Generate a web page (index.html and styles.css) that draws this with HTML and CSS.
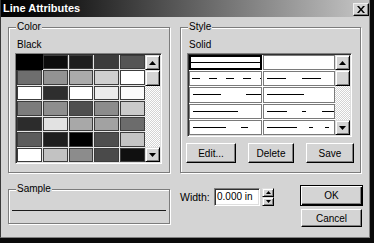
FILE: index.html
```html
<!DOCTYPE html>
<html>
<head>
<meta charset="utf-8">
<link rel="stylesheet" href="styles.css">
</head>
<body>
<div class="window">
  <div class="titlebar">
    <span class="title">Line Attributes</span>
    <span class="close"><svg width="8" height="7" viewBox="0 0 8 7"><path d="M0 0h2l2 2.5L6 0h2L5 3.5 8 7H6L4 4.5 2 7H0l3-3.5z" fill="#000"/></svg></span>
  </div>
  <div class="content">
    <fieldset class="group">
      <legend>Color</legend>
      <div class="current">Black</div>
      <div class="frame color-frame">
        <div class="swatches">
          <div class="sw sel" style="background:#000"></div><div class="sw" style="background:#0c0c0c"></div><div class="sw" style="background:#1e1e1e"></div><div class="sw" style="background:#3c3c3c"></div><div class="sw" style="background:#555"></div>
          <div class="sw" style="background:#6e6e6e"></div><div class="sw" style="background:#939393"></div><div class="sw" style="background:#ababab"></div><div class="sw" style="background:#cfcfcf"></div><div class="sw" style="background:#fff"></div>
          <div class="sw" style="background:#fff"></div><div class="sw" style="background:#2e2e2e"></div><div class="sw" style="background:#fff"></div><div class="sw" style="background:#ececec"></div><div class="sw" style="background:#fafafa"></div>
          <div class="sw" style="background:#7c7c7c"></div><div class="sw" style="background:#8e8e8e"></div><div class="sw" style="background:#4e4e4e"></div><div class="sw" style="background:#8c8c8c"></div><div class="sw" style="background:#cacaca"></div>
          <div class="sw" style="background:#2c2c2c"></div><div class="sw" style="background:#e2e2e2"></div><div class="sw" style="background:#a8a8a8"></div><div class="sw" style="background:#a2a2a2"></div><div class="sw" style="background:#6c6c6c"></div>
          <div class="sw" style="background:#5c5c5c"></div><div class="sw" style="background:#1e1e1e"></div><div class="sw" style="background:#000"></div><div class="sw" style="background:#4e4e4e"></div><div class="sw" style="background:#c4c4c4"></div>
          <div class="sw" style="background:#fff"></div><div class="sw" style="background:#c2c2c2"></div><div class="sw" style="background:#8c8c8c"></div><div class="sw" style="background:#4a4a4a"></div><div class="sw" style="background:#101010"></div>
        </div>
        <div class="scrollbar">
          <div class="sbtn"><svg width="7" height="4" viewBox="0 0 7 4"><polygon points="3.5,0 7,4 0,4" fill="#000"/></svg></div>
          <div class="thumb"></div>
          <div class="track"></div>
          <div class="sbtn"><svg width="7" height="4" viewBox="0 0 7 4"><polygon points="0,0 7,0 3.5,4" fill="#000"/></svg></div>
        </div>
      </div>
    </fieldset>

    <fieldset class="group">
      <legend>Style</legend>
      <div class="current">Solid</div>
      <div class="frame style-frame">
        <div class="styles">
          <div class="st sel"><svg class="ln" height="3"><line x1="0" y1="1.5" x2="100%" y2="1.5"/></svg></div>
          <div class="st"></div>
          <div class="st"><svg class="ln p1" height="3"><line x1="2" y1="1.5" x2="100%" y2="1.5"/></svg></div>
          <div class="st"><svg class="ln p2" height="3"><line x1="3" y1="1.5" x2="100%" y2="1.5"/></svg></div>
          <div class="st"><svg class="ln p3" height="3"><line x1="3" y1="1.5" x2="100%" y2="1.5"/></svg></div>
          <div class="st"><svg class="ln p4" height="3"><line x1="3" y1="1.5" x2="100%" y2="1.5"/></svg></div>
          <div class="st"><svg class="ln p5" height="3"><line x1="3" y1="1.5" x2="100%" y2="1.5"/></svg></div>
          <div class="st"><svg class="ln p6" height="3"><line x1="3" y1="1.5" x2="100%" y2="1.5"/></svg></div>
          <div class="st"><svg class="ln p7" height="3"><line x1="3" y1="1.5" x2="100%" y2="1.5"/></svg></div>
          <div class="st"><svg class="ln p8" height="3"><line x1="3" y1="1.5" x2="100%" y2="1.5"/></svg></div>
        </div>
        <div class="scrollbar">
          <div class="sbtn"><svg width="7" height="4" viewBox="0 0 7 4"><polygon points="3.5,0 7,4 0,4" fill="#000"/></svg></div>
          <div class="thumb"></div>
          <div class="track"></div>
          <div class="sbtn"><svg width="7" height="4" viewBox="0 0 7 4"><polygon points="0,0 7,0 3.5,4" fill="#000"/></svg></div>
        </div>
      </div>
      <div class="actions">
        <button class="btn edit">Edit...</button>
        <button class="btn del">Delete</button>
        <button class="btn save">Save</button>
      </div>
    </fieldset>

    <fieldset class="group sample">
      <legend>Sample</legend>
      <div class="sample-line"></div>
    </fieldset>

    <div class="bottom-right">
      <div class="width-row">
        <span class="wlabel">Width:</span>
        <div class="field">0.000 in</div>
        <div class="spin">
          <div class="spbtn"><svg width="5" height="3" viewBox="0 0 5 3"><polygon points="2.5,0 5,3 0,3" fill="#000"/></svg></div>
          <div class="spbtn"><svg width="5" height="3" viewBox="0 0 5 3"><polygon points="0,0 5,0 2.5,3" fill="#000"/></svg></div>
        </div>
      </div>
      <div class="dialog-buttons">
        <button class="btn ok">OK</button>
        <button class="btn cancel">Cancel</button>
      </div>
    </div>
  </div>
</div>
</body>
</html>
```
FILE: styles.css
```css
html, body {
  margin: 0;
  padding: 0;
  background: #0a0a0a;
}
body {
  font-family: "Liberation Sans", Arial, sans-serif;
  font-size: 10px;
  color: #000;
}
.window {
  width: 370px;
  height: 238px;
  box-sizing: border-box;
  background: #d4d4d4;
  border-left: 1px solid #3a3a3a;
  border-right: 1px solid #808080;
  border-bottom: 1px solid #808080;
}
.titlebar {
  height: 17px;
  display: flex;
  align-items: center;
  padding-left: 2px;
  background: linear-gradient(90deg, #000 0%, #0c0c0c 12%, #c6c6c6 100%);
}
.title {
  flex: 1;
  color: #fff;
  font-weight: bold;
  font-size: 11px;
  line-height: 17px;
}
.close {
  width: 16px;
  height: 13px;
  box-sizing: border-box;
  display: flex;
  align-items: center;
  justify-content: center;
  background: #d4d4d4;
  border: 1px solid;
  border-color: #f0f0f0 #000 #000 #f0f0f0;
  box-shadow: inset -1px -1px 0 #808080;
  margin-top: 1px;
}
.content {
  display: grid;
  grid-template-columns: 162px 181px;
  grid-template-rows: 152px 41px;
  column-gap: 10px;
  row-gap: 10px;
  padding: 4px 0 0 7px;
}
.group {
  margin: 0;
  padding: 0;
  min-width: 0;
  box-sizing: border-box;
  border: 1px solid #7c7c7c;
  box-shadow: inset 1px 1px 0 #fff, 1px 1px 0 #fff;
}
.group legend {
  margin-left: 7px;
  padding: 0 1px;
  font-size: 10px;
  line-height: 12px;
  background: #d4d4d4;
}
.current {
  margin: 6px 0 0 8px;
  line-height: 12px;
}
.frame {
  margin: 2px 0 0 6px;
  box-sizing: border-box;
  display: flex;
  padding: 1px;
  border: 1px solid;
  border-color: #808080 #fff #fff #808080;
  box-shadow: inset 1px 1px 0 #303030, inset -1px -1px 0 #dedede;
}
.color-frame {
  width: 147px;
  height: 111px;
}
.style-frame {
  width: 165px;
  height: 84px;
}
.swatches {
  flex: 1;
  display: grid;
  grid-template-columns: repeat(5, 1fr);
  grid-template-rows: repeat(7, 1fr);
  gap: 1px;
  background: #e6e6e6;
}
.sw {
  border: 1px solid #3c3c3c;
}
.sw.sel {
  border-color: #000;
  box-shadow: 0 0 0 1px #000;
}
.scrollbar {
  width: 15px;
  display: flex;
  flex-direction: column;
}
.sbtn, .thumb {
  height: 15px;
  box-sizing: border-box;
  background: #d4d4d4;
  border: 1px solid;
  border-color: #dedede #000 #000 #dedede;
  box-shadow: inset 1px 1px 0 #fff, inset -1px -1px 0 #808080;
  display: flex;
  align-items: center;
  justify-content: center;
}
.thumb {
  height: 16px;
}
.track {
  flex: 1;
  background: repeating-conic-gradient(#fff 0 25%, #d4d4d4 0 50%) 0 0 / 2px 2px;
}
.styles {
  flex: 1;
  display: grid;
  grid-template-columns: 1fr 1fr;
  grid-template-rows: repeat(5, 1fr);
  gap: 1px;
  background: #fff;
}
.st {
  border: 1px solid #7a7a7a;
  background: #fff;
  display: flex;
  align-items: center;
  min-width: 0;
}
.st.sel {
  border: 2px solid #000;
}
.ln {
  width: 100%;
  display: block;
  overflow: hidden;
}
.ln line {
  stroke: #000;
  stroke-width: 1;
  shape-rendering: crispEdges;
}
.p1 line { stroke-dasharray: 8 9; }
.p2 line { stroke-dasharray: 19 16; }
.p3 line { stroke-dasharray: 28 25; }
.p4 line { stroke-dasharray: 37 60; }
.p5 line { stroke-dasharray: 45 60; }
.p6 line { stroke-dasharray: 20 15 4 16; }
.p7 line { stroke-dasharray: 33 15 7 40; }
.p8 line { stroke-dasharray: 30 12 4 12 4 30; }
.btn {
  font-family: inherit;
  font-size: 10px;
  color: #000;
  padding: 0;
  margin: 0;
  box-sizing: border-box;
  background: #d4d4d4;
  border: 1px solid;
  border-color: #fff #000 #000 #fff;
  box-shadow: inset -1px -1px 0 #808080;
}
.actions {
  margin: 6px 0 0 5px;
  width: 168px;
  display: flex;
  justify-content: space-between;
}
.actions .btn {
  height: 20px;
}
.edit { width: 50px; }
.del { width: 46px; }
.save { width: 48px; }
.sample-line {
  margin: 15px 3px 0 3px;
  border-top: 1px solid #1a1a1a;
}
.bottom-right {
  display: flex;
  align-items: flex-start;
}
.width-row {
  display: flex;
  align-items: center;
  margin-top: 5px;
  height: 18px;
}
.wlabel {
  width: 34px;
  font-size: 10.5px;
}
.field {
  width: 46px;
  height: 18px;
  box-sizing: border-box;
  background: #fff;
  border: 1px solid;
  border-color: #808080 #fff #fff #808080;
  box-shadow: inset 1px 1px 0 #303030, inset -1px -1px 0 #dedede;
  padding-left: 2px;
  line-height: 16px;
}
.spin {
  margin-left: 2px;
  width: 12px;
  height: 18px;
  display: flex;
  flex-direction: column;
}
.spbtn {
  height: 9px;
  box-sizing: border-box;
  background: #d4d4d4;
  border: 1px solid;
  border-color: #dedede #000 #000 #dedede;
  box-shadow: inset 1px 1px 0 #fff, inset -1px -1px 0 #808080;
  display: flex;
  align-items: center;
  justify-content: center;
}
.dialog-buttons {
  margin-left: auto;
  margin-right: -2px;
  margin-top: 2px;
  width: 63px;
  display: flex;
  flex-direction: column;
  align-items: center;
  gap: 3px;
}
.ok {
  width: 63px;
  height: 21px;
  border: 1px solid #000;
  box-shadow: inset 1px 1px 0 #fff, inset -1px -1px 0 #000, inset -2px -2px 0 #808080;
}
.cancel {
  width: 61px;
  height: 18px;
}
```
